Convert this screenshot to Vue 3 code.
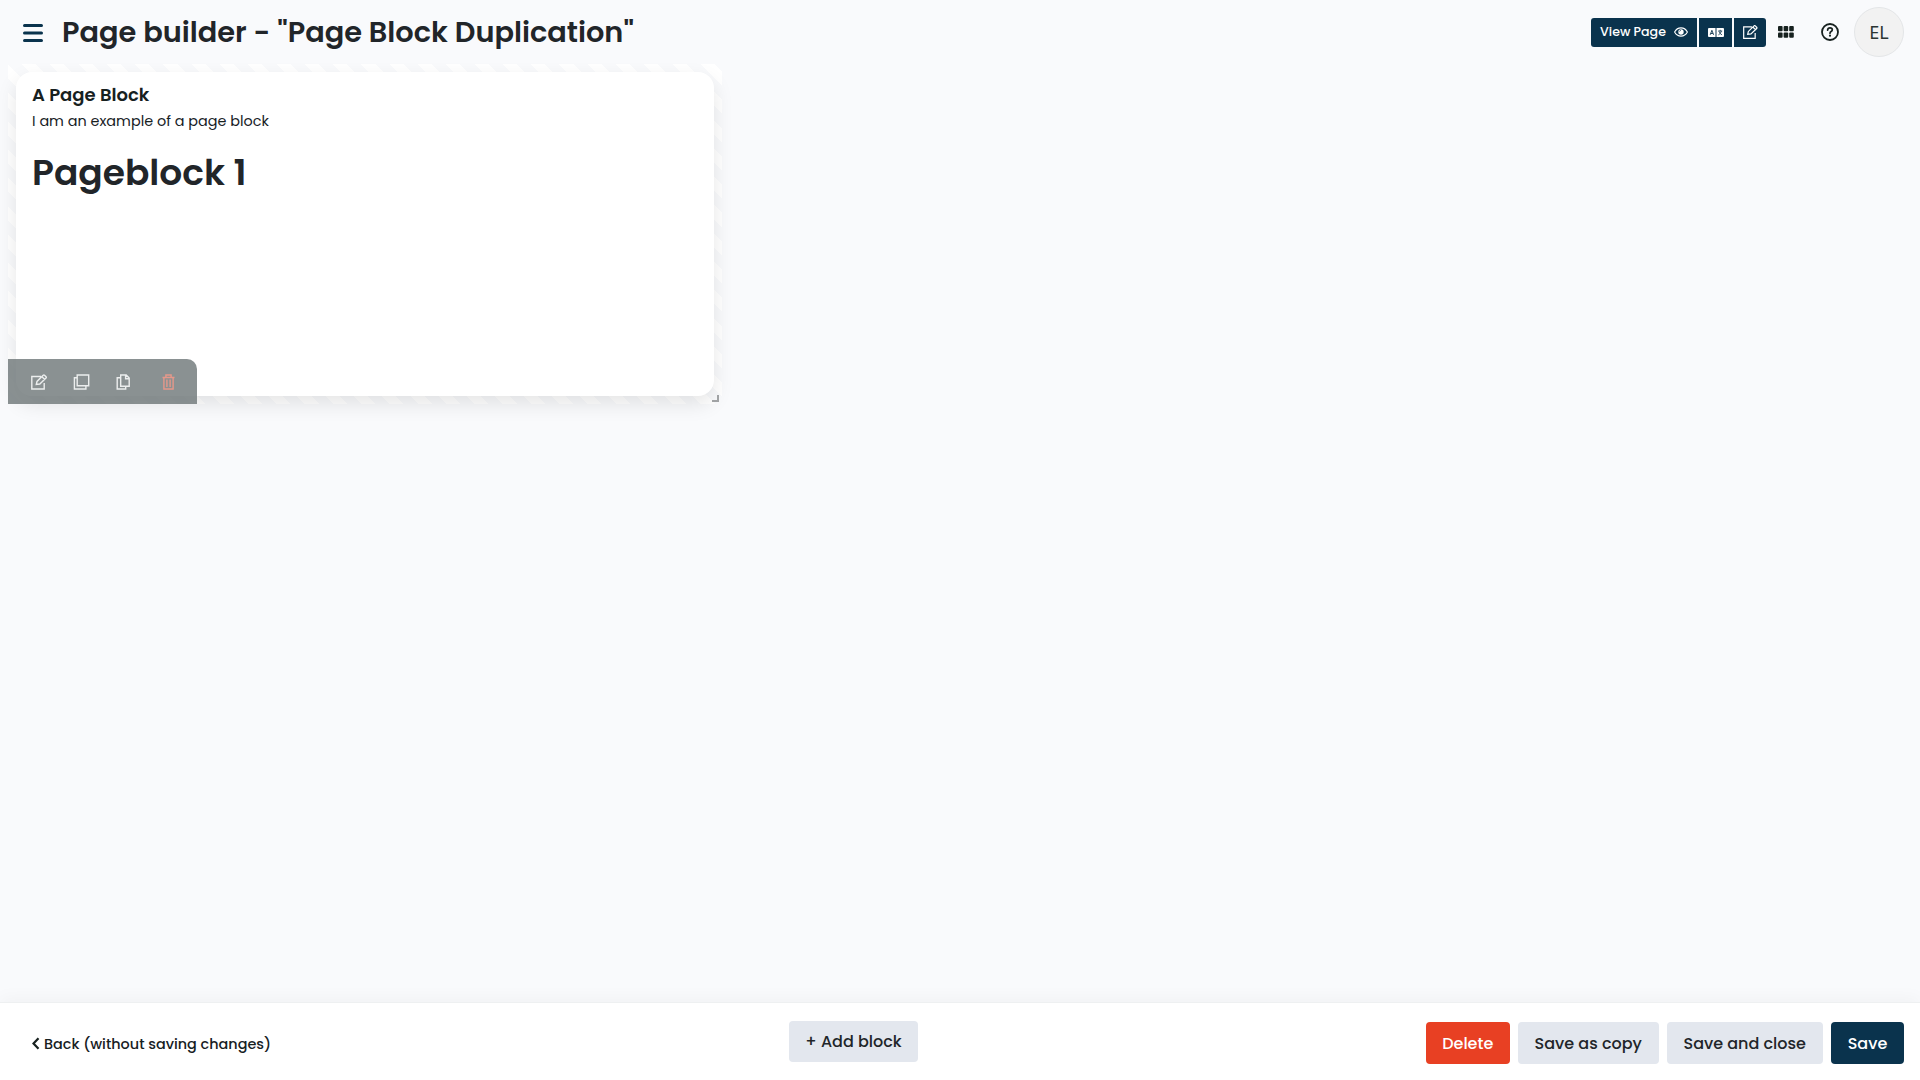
<script setup>
const tools = ['edit', 'duplicate', 'copy', 'trash']
</script>

<template>
  <div class="page">
    <header class="topbar">
      <svg class="burger" width="20" height="18" viewBox="0 0 20 18"><path d="M1.500 1.500h17M1.500 9h17M1.500 16.500h17" stroke="#0a334d" stroke-width="3" stroke-linecap="round" /></svg>
      <h1>Page builder - "Page Block Duplication"</h1>
      <div class="actions">
        <div class="group">
          <button class="view">View Page
            <svg width="14" height="10" viewBox="0 0 14 10" fill="none" stroke="#fff"><path d="M.6 5C3.5-.5 10.5-.5 13.4 5 10.500 10.500 3.500 10.500.6 5Z" stroke-width="1.100" /><circle cx="7" cy="5" r="2.700" fill="#fff" stroke="none" /><path d="M5.600 4.600q0-1.200 1.300-1.300" stroke="#0a334d" stroke-width=".7" /></svg>
          </button>
          <button class="lang">
            <svg width="16" height="9" viewBox="0 0 16 9"><path fill="#fff" d="M1 0h6.500v9H1a1 1 0 0 1-1-1V1a1 1 0 0 1 1-1ZM8.500 0H15a1 1 0 0 1 1 1v7a1 1 0 0 1-1 1H8.500Z" /><path d="M2.200 6.800 3.900 2.300 5.600 6.800M2.900 5.500h2" fill="none" stroke="#0a334d" stroke-width=".9" /><path d="M10.200 3h4M12.200 1.800V3M10.400 6.900q2.500-1.200 3-3.900M11 3.300q.8 2.600 3 3.600" fill="none" stroke="#0a334d" stroke-width=".8" /></svg>
          </button>
          <button class="pen">
            <svg width="15" height="14" viewBox="0 0 16 15" fill="none" stroke="#fff" stroke-width="1.300"><path d="M9.500 2H.7v12.300H13V8.500M5 10l.7-3.100L11.800.9q.7-.6 1.300 0l1.500 1.500q.6.700 0 1.300L8.500 9.600ZM10.500 2.200l2.800 2.800" /></svg>
          </button>
        </div>
        <svg class="grid" width="16" height="12" viewBox="0 0 16 12" fill="#17211f"><rect v-for="n in 6" :key="n" :x="((n - 1) % 3) * 5.6" :y="n > 3 ? 6.6 : 0" width="4.600" height="5.200" rx="1" /></svg>
        <svg class="help" width="18" height="18" viewBox="0 0 18 18" fill="none" stroke="#17211f"><circle cx="9" cy="9" r="8" stroke-width="1.800" /><path d="M6.600 7.100q.2-2.200 2.400-2.200 2.300 0 2.300 1.900 0 1.100-1.200 1.700Q9 9.100 9 10.200" stroke-width="1.700" stroke-linecap="round" /><circle cx="9" cy="12.700" r="1.100" fill="#17211f" stroke="none" /></svg>
        <div class="avatar">EL</div>
      </div>
    </header>

    <main>
      <section class="item">
        <article class="card">
          <h2>A Page Block</h2>
          <p>I am an example of a page block</p>
          <h3>Pageblock 1</h3>
        </article>
        <div class="toolbar">
          <svg v-for="t in tools" :key="t" :class="t" width="17" height="16" viewBox="0 0 17 16" fill="none" stroke="#eceeee" stroke-width="1.400">
            <path v-if="t === 'edit'" d="M10 2.500H.8V15h12.400V9M5.300 10.500l.7-3.100L12.200 1.300q.7-.6 1.300 0l1.500 1.500q.6.700 0 1.300L8.800 10ZM11 2.700l2.700 2.700" />
            <path v-if="t === 'duplicate'" d="M4.200 1h11.500v10.800H4.200ZM4.200 3.700H1.400V15h11.500v-3.200" />
            <path v-if="t === 'copy'" d="M5.700 1h5.500l3 3v8.200H5.700ZM10.600 1v3.700h3.600M5.700 3.700H2.200V15h8.500v-2.800" />
            <path v-if="t === 'trash'" stroke="#e5988a" d="M2.500 3.500h12M3.900 3.500V15h9.200V3.500M5.900 3.500V1h5.200v2.500M6.900 5.500v7.500M10.100 5.500v7.500" />
          </svg>
        </div>
        <svg class="handle" width="7" height="7" viewBox="0 0 7 7"><path d="M0 6h6V0" fill="none" stroke="#a0a2a4" stroke-width="2" /></svg>
      </section>
    </main>

    <footer>
      <a class="back"><svg width="8" height="13" viewBox="0 0 8 13"><path d="M6.500 1.200 1.500 6.500l5 5.300" fill="none" stroke="#17211f" stroke-width="2.200" /></svg>Back (without saving changes)</a>
      <button class="btn add">+ Add block</button>
      <div class="end">
        <button class="btn delete">Delete</button>
        <button class="btn save-copy">Save as copy</button>
        <button class="btn save-close">Save and close</button>
        <button class="btn save">Save</button>
      </div>
    </footer>
  </div>
</template>

<style>
body { margin: 0; }
</style>

<style scoped>
* { box-sizing: border-box; }
.page { width: 100%; height: 1080px; display: flex; flex-direction: column; background: #f9fafc; overflow: hidden; font-family: Poppins, Inter, sans-serif; color: #212529; }
h1, h2, h3, p { margin: 0; white-space: nowrap; }
button { border: 0; padding: 0; font: inherit; color: inherit; display: flex; align-items: center; justify-content: center; white-space: nowrap; }
svg { display: block; flex: none; }
.topbar { height: 64px; display: flex; align-items: center; padding-left: 23px; }
.burger { margin-top: 1px; }
h1 { margin-left: 19px; font-size: 28.8px; line-height: 40px; font-weight: 600; }
.actions { margin-left: auto; display: flex; align-items: center; padding-right: 16px; }
.group { display: flex; gap: 2px; color: #fff; font-size: 12.6px; font-weight: 500; }
.group button { background: #0a334d; height: 29px; }
.group .view { width: 106px; gap: 8px; border-radius: 3px 0 0 3px; }
.group .lang { width: 33px; }
.group .pen { width: 32px; border-radius: 0 3px 3px 0; }
.grid { margin-left: 12px; }
.help { margin-left: 27px; }
.avatar { margin-left: 15px; width: 50px; height: 50px; border-radius: 50%; border: 1px solid #e4e6e8; background: #f2f2f2; display: flex; align-items: center; justify-content: center; font: 18px "Noto Sans", sans-serif; color: #2b3533; }
main { flex: 1; padding-left: 8px; }
.item { position: relative; width: 714.2px; height: 340px; padding: 8px; background: repeating-linear-gradient(45deg, transparent 0 10px, #fff 10px 20px); }
.card { height: 324px; border-radius: 16px; background: #fff; padding: 10px 16px; box-shadow: 0 8px 20px rgba(0, 0, 0, .1); }
h2 { font-size: 18px; line-height: 26px; font-weight: 600; color: #17211f; }
p { font-size: 14.4px; line-height: 27px; color: #17211f; }
h3 { font-size: 36px; line-height: 54px; font-weight: 600; margin-top: 11px; }
.toolbar { position: absolute; left: 0; bottom: 0; width: 189px; height: 45px; border-radius: 0 10px 0 0; background: rgba(112, 121, 122, .82); display: flex; align-items: center; padding: 0 0 0 22.5px; }
.duplicate { margin-left: 25.5px; }
.copy { margin-left: 25px; }
.trash { margin-left: 28px; }
.handle { position: absolute; right: 3px; bottom: 2px; }
footer { height: 78px; background: #fff; border-top: 1px solid #eef0f1; box-shadow: 0 -4px 16px rgba(0, 0, 0, .035); display: flex; align-items: center; padding: 3px 16px 0 32px; }
.back { display: flex; align-items: center; gap: 4px; font-size: 14.4px; width: 757px; margin-top: 2px; font-weight: 500; color: #17211f; white-space: nowrap; }
.back svg { margin-top: -2px; }
.btn { height: 42px; border-radius: 4px; font-size: 16px; font-weight: 500; background: #e3e7ee; }
.add { width: 129px; height: 41px; margin-top: -3px; }
.end { margin-left: auto; display: flex; gap: 8px; }
.delete { width: 84.5px; background: #e84023; color: #fff; }
.save-copy { width: 140.5px; }
.save-close { width: 156.5px; }
.save { width: 73px; background: #0a334d; color: #fff; }
</style>
